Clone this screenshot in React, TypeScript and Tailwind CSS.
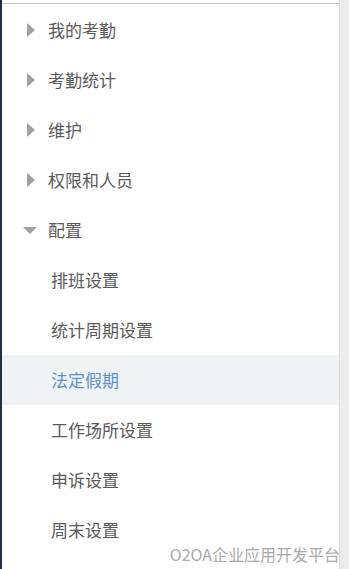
const groups = ["我的考勤", "考勤统计", "维护", "权限和人员"];
const subs = ["排班设置", "统计周期设置", "法定假期", "工作场所设置", "申诉设置", "周末设置"];
const active = "法定假期";

function RightTri() {
  return (
    <svg width="9" height="14" viewBox="0 0 9 14" className="shrink-0">
      <path d="M0 0 L8 7 L0 14 Z" fill="#a0a0a0" />
    </svg>
  );
}

function DownTri() {
  return (
    <svg width="14" height="7" viewBox="0 0 14 7" className="shrink-0">
      <path d="M0 0 L14 0 L7 7 Z" fill="#a0a0a0" />
    </svg>
  );
}

export default function App() {
  return (
    <div
      className="relative flex w-[349px] h-[569px] bg-white overflow-hidden"
      style={{ fontFamily: '"Noto Sans CJK SC", "Liberation Sans", sans-serif' }}
    >
      <div className="w-[2px] bg-[#1e3446]" />

      <div className="flex-1 flex flex-col pt-[3px]">
        <div className="border-t border-[#c6c6c6] pt-px">
          {groups.map((g) => (
            <div key={g} className="h-[50px] flex items-center pl-[25px] gap-[12px] text-[17px] text-[#5a5a5a]">
              <RightTri />
              <span>{g}</span>
            </div>
          ))}

          <div className="h-[50px] flex items-center pl-[21px] gap-[11px] text-[17px] text-[#5a5a5a]">
            <DownTri />
            <span>配置</span>
          </div>

          {subs.map((s) => (
            <div
              key={s}
              className={
                s === active
                  ? "h-[50px] flex items-center pl-[49px] text-[17px] text-[#5b8fcf] bg-[#f0f3f6]"
                  : "h-[50px] flex items-center pl-[49px] text-[17px] text-[#5a5a5a]"
              }
            >
              {s}
            </div>
          ))}
        </div>
      </div>

      <div className="w-[10px] bg-[#ebebeb] border-l border-[#dcdcdc]" />

      <div className="absolute right-[9px] bottom-[7px] text-[16px] text-[#a9a9a9] leading-none">
        O2OA企业应用开发平台
      </div>
    </div>
  );
}
